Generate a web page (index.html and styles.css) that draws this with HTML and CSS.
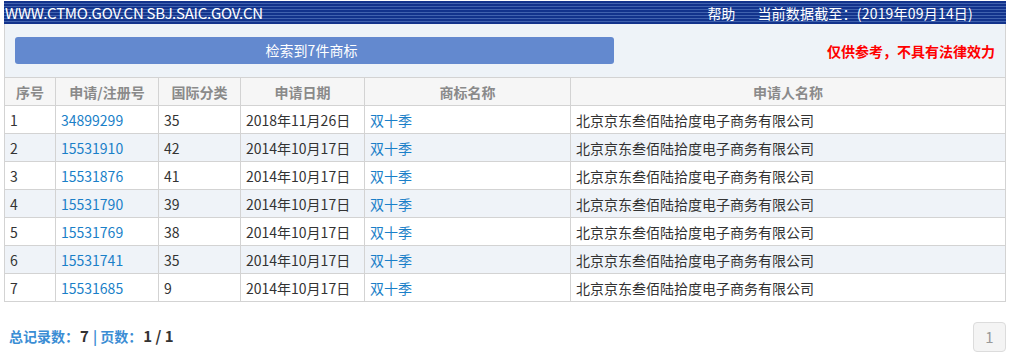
FILE: index.html
```html
<!DOCTYPE html>
<html lang="zh-CN">
<head>
<meta charset="utf-8">
<title>商标检索结果</title>
<link rel="stylesheet" href="styles.css">
</head>
<body>
<div class="page">
  <div class="topbar">
    <span class="site">WWW.CTMO.GOV.CN SBJ.SAIC.GOV.CN</span>
    <span class="right"><span class="help">帮助</span><span class="date">当前数据截至：(2019年09月14日)</span></span>
  </div>
  <div class="panel">
    <div class="result-btn">检索到7件商标</div>
    <div class="notice">仅供参考，不具有法律效力</div>
  </div>
  <table class="grid">
    <colgroup>
      <col class="c1"><col class="c2"><col class="c3"><col class="c4"><col class="c5"><col class="c6">
    </colgroup>
    <thead>
      <tr><th>序号</th><th>申请/注册号</th><th>国际分类</th><th>申请日期</th><th>商标名称</th><th>申请人名称</th></tr>
    </thead>
    <tbody>
      <tr><td>1</td><td class="link">34899299</td><td>35</td><td>2018年11月26日</td><td class="link">双十季</td><td>北京京东叁佰陆拾度电子商务有限公司</td></tr>
      <tr><td>2</td><td class="link">15531910</td><td>42</td><td>2014年10月17日</td><td class="link">双十季</td><td>北京京东叁佰陆拾度电子商务有限公司</td></tr>
      <tr><td>3</td><td class="link">15531876</td><td>41</td><td>2014年10月17日</td><td class="link">双十季</td><td>北京京东叁佰陆拾度电子商务有限公司</td></tr>
      <tr><td>4</td><td class="link">15531790</td><td>39</td><td>2014年10月17日</td><td class="link">双十季</td><td>北京京东叁佰陆拾度电子商务有限公司</td></tr>
      <tr><td>5</td><td class="link">15531769</td><td>38</td><td>2014年10月17日</td><td class="link">双十季</td><td>北京京东叁佰陆拾度电子商务有限公司</td></tr>
      <tr><td>6</td><td class="link">15531741</td><td>35</td><td>2014年10月17日</td><td class="link">双十季</td><td>北京京东叁佰陆拾度电子商务有限公司</td></tr>
      <tr><td>7</td><td class="link">15531685</td><td>9</td><td>2014年10月17日</td><td class="link">双十季</td><td>北京京东叁佰陆拾度电子商务有限公司</td></tr>
    </tbody>
  </table>
  <div class="footer">
    <div class="summary"><span class="lbl">总记录数：</span><b>7</b><span class="lbl"> | 页数：</span><b>1 / 1</b></div>
    <div class="pager"><span class="pg">1</span></div>
  </div>
</div>
</body>
</html>
```
FILE: styles.css
```css
* { box-sizing: border-box; }
html, body { margin: 0; padding: 0; background: #fff; }
body {
  font-family: "Noto Sans CJK SC", "Noto Sans", sans-serif;
  font-size: 14px;
  color: #333;
}
.page {
  width: 1002px;
  margin: 1px 0 0 4px;
}
.topbar {
  height: 23px;
  display: flex;
  align-items: center;
  justify-content: space-between;
  padding: 0 33px 0 1px;
  color: #fff;
  font-size: 14px;
  background: repeating-linear-gradient(to bottom, #12338c 0px, #12338c 2px, #4062ae 2px, #4062ae 3px);
}
.topbar .site { font-size: 15px; letter-spacing: -0.25px; }
.topbar .date { letter-spacing: 0.2px; }
.topbar .help { margin-right: 22px; }
.panel {
  height: 53px;
  background: #eef3f8;
  border-left: 1px solid #d4d4d4;
  border-right: 1px solid #d4d4d4;
  display: flex;
  align-items: center;
  justify-content: space-between;
  padding: 0 10px 0 10px;
}
.result-btn {
  width: 599px;
  height: 27px;
  background: #6389cf;
  border-radius: 3px;
  color: #fff;
  font-size: 14px;
  line-height: 27px;
  text-align: center;
  padding-right: 6px;
}
.notice {
  color: #f00;
  font-weight: bold;
  font-size: 14px;
}
.grid {
  width: 1002px;
  border-collapse: collapse;
  table-layout: fixed;
}
.c1 { width: 51px; }
.c2 { width: 103px; }
.c3 { width: 82px; }
.c4 { width: 124px; }
.c5 { width: 206px; }
.c6 { width: auto; }
.grid th, .grid td {
  border: 1px solid #d3d3d3;
  height: 28px;
  padding: 0 5px;
  white-space: nowrap;
  overflow: hidden;
}
.grid th {
  background: #f6f6f6;
  color: #8a8a8a;
  font-weight: bold;
  text-align: center;
  font-size: 14px;
}
.grid td { color: #333; text-align: left; }
.grid tbody tr:nth-child(even) td { background: #eff3f8; }
.grid td.link { color: #1a7fc8; }
.footer {
  display: flex;
  justify-content: space-between;
  align-items: center;
  margin-top: 20px;
  padding-left: 5px;
}
.summary { font-size: 14px; color: #333; margin-top: -4px; }
.summary .lbl { color: #3b8dd4; font-weight: bold; }
.summary b { color: #333; font-weight: bold; font-size: 15px; margin: 0 1px; }
.pg {
  display: inline-block;
  width: 33px;
  height: 30px;
  line-height: 28px;
  text-align: center;
  border: 1px solid #dcdcdc;
  border-radius: 4px;
  background: #f4f4f4;
  color: #999;
  font-size: 15px;
}
```
